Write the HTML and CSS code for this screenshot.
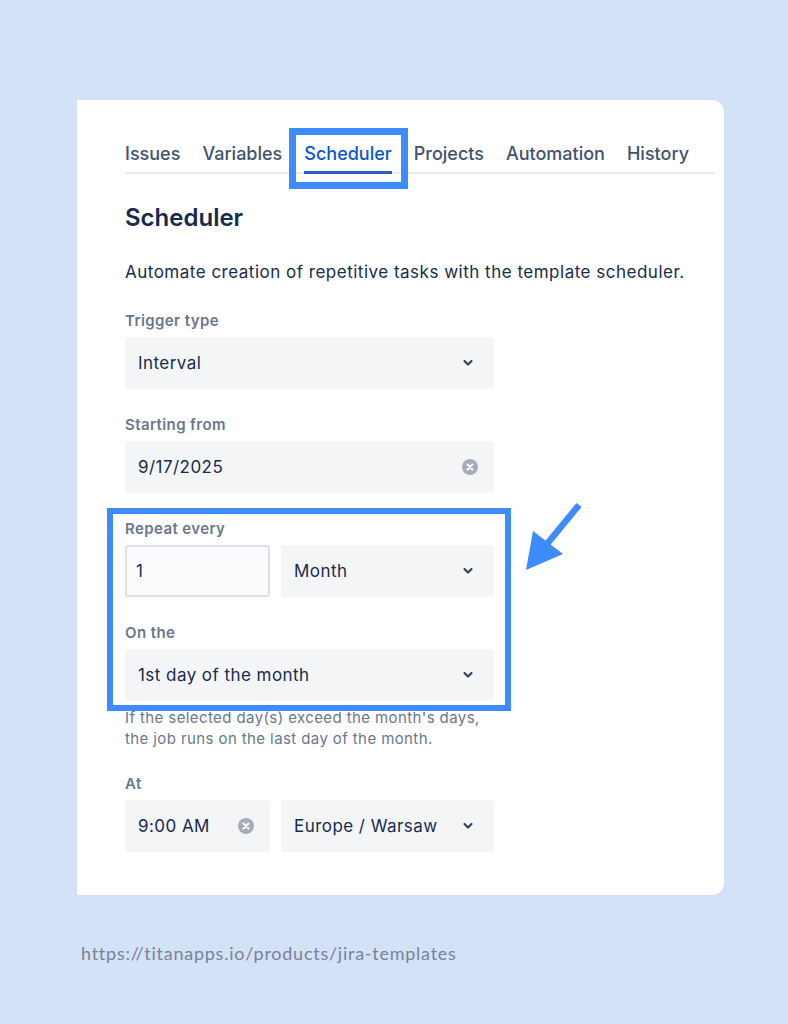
FILE: index.html
```html
<!DOCTYPE html>
<html lang="en">
<head>
    <meta charset="UTF-8">
    <title>Scheduler</title>
    <link rel="stylesheet" href="styles.css">
</head>
<body>
<div class="card">
    <nav class="tabs">
        <span class="tab">Issues</span>
        <span class="tab">Variables</span>
        <span class="tab active">Scheduler</span>
        <span class="tab">Projects</span>
        <span class="tab">Automation</span>
        <span class="tab">History</span>
    </nav>

    <h2>Scheduler</h2>
    <p class="desc">Automate creation of repetitive tasks with the template scheduler.</p>

    <div class="field">
        <label>Trigger type</label>
        <div class="select wide">
            <span>Interval</span>
            <svg class="chev" viewBox="0 0 12 8"><path d="M2.5 2l3.5 3.5 3.5-3.5"/></svg>
        </div>
    </div>

    <div class="field">
        <label>Starting from</label>
        <div class="select wide">
            <span>9/17/2025</span>
            <svg class="clear" viewBox="0 0 16 16"><circle cx="8" cy="8" r="8"/><path d="M5.5 5.5l5 5M10.5 5.5l-5 5"/></svg>
        </div>
    </div>

    <div class="group">
        <div class="field">
            <label>Repeat every</label>
            <div class="row">
                <div class="input">1</div>
                <div class="select half">
                    <span>Month</span>
                    <svg class="chev" viewBox="0 0 12 8"><path d="M2.5 2l3.5 3.5 3.5-3.5"/></svg>
                </div>
            </div>
        </div>
        <div class="field">
            <label>On the</label>
            <div class="select wide">
                <span>1st day of the month</span>
                <svg class="chev" viewBox="0 0 12 8"><path d="M2.5 2l3.5 3.5 3.5-3.5"/></svg>
            </div>
        </div>
    </div>
    <p class="help">If the selected day(s) exceed the month's days,<br>the job runs on the last day of the month.</p>

    <div class="field at">
        <label>At</label>
        <div class="row">
            <div class="select small">
                <span>9:00 AM</span>
                <svg class="clear" viewBox="0 0 16 16"><circle cx="8" cy="8" r="8"/><path d="M5.5 5.5l5 5M10.5 5.5l-5 5"/></svg>
            </div>
            <div class="select half">
                <span>Europe / Warsaw</span>
                <svg class="chev" viewBox="0 0 12 8"><path d="M2.5 2l3.5 3.5 3.5-3.5"/></svg>
            </div>
        </div>
    </div>

    <svg class="arrow" viewBox="0 0 70 80">
        <path class="shaft" d="M59 7L22 52"/>
        <path class="head" d="M6 72L13 33L43 56Z"/>
    </svg>
</div>
<p class="url">https://titanapps.io/products/jira-templates</p>
</body>
</html>
```

FILE: styles.css
```css
body {
    margin: 0;
    padding: 100px 0 0 0;
    background: #d3e2f7;
    font-family: "Inter", "Noto Sans", sans-serif;
    color: #172b4d;
    height: 1024px;
    box-sizing: border-box;
}

h2, p, label {
    margin: 0;
}

.card {
    position: relative;
    margin-left: 77px;
    width: 647px;
    height: 795px;
    box-sizing: border-box;
    padding: 42px 9px 0 48px;
    background: #fff;
    border-radius: 0 12px 12px 0;
}

.tabs {
    display: flex;
    gap: 22px;
    border-bottom: 2px solid #ebecf0;
}

.tab {
    position: relative;
    font-size: 18px;
    line-height: 24px;
    font-weight: 500;
    color: #42526e;
    padding-bottom: 5px;
    border-bottom: 3px solid transparent;
    margin-bottom: -2px;
}

.tab.active {
    color: #0b57d0;
    border-bottom-color: #2a5fcf;
}

.tab.active::after {
    content: "";
    position: absolute;
    top: -14px;
    bottom: -18px;
    left: -15px;
    right: -16px;
    border: 7px solid #3d8bfd;
}

h2 {
    margin-top: 28px;
    font-size: 24px;
    line-height: 32px;
    font-weight: 600;
    color: #172b4d;
}

.desc {
    margin-top: 26px;
    font-size: 17px;
    letter-spacing: 0.5px;
    line-height: 24px;
}

.field {
    margin-top: 26px;
}

.desc + .field {
    margin-top: 27px;
}

.field label {
    display: block;
    font-size: 15px;
    letter-spacing: 0.4px;
    line-height: 20px;
    font-weight: 600;
    color: #6b778c;
    margin-bottom: 6px;
}

.row {
    display: flex;
    gap: 11px;
}

.select {
    display: flex;
    align-items: center;
    justify-content: space-between;
    height: 52px;
    box-sizing: border-box;
    padding: 0 20px 0 13px;
    background: #f4f5f7;
    border-radius: 3px;
    font-size: 17px;
    letter-spacing: 0.45px;
}

.wide {
    width: 369px;
}

.half {
    width: 213px;
}

.small {
    width: 145px;
}

.input {
    width: 145px;
    height: 52px;
    box-sizing: border-box;
    display: flex;
    align-items: center;
    padding-left: 9px;
    border: 2px solid #dfe1e6;
    border-radius: 3px;
    background: #fafbfc;
    font-size: 17px;
}

.chev {
    width: 12px;
    height: 8px;
    fill: none;
    stroke: #344563;
    stroke-width: 2.2;
    stroke-linecap: round;
    stroke-linejoin: round;
}

.clear {
    width: 16px;
    height: 16px;
    margin-right: -4px;
}

.clear circle {
    fill: #a5adba;
}

.clear path {
    stroke: #fff;
    stroke-width: 2;
    stroke-linecap: round;
}

.group {
    position: relative;
    width: 369px;
    margin-top: 26px;
}

.group::after {
    content: "";
    position: absolute;
    top: -11px;
    bottom: -10px;
    left: -18px;
    right: -17px;
    border: 6px solid #3d8bfd;
}

.help {
    margin-top: 6px;
    font-size: 15px;
    letter-spacing: 0.4px;
    line-height: 21px;
    color: #6b778c;
}

.field.at {
    margin-top: 25px;
}

.arrow {
    position: absolute;
    left: 443px;
    top: 398px;
    width: 70px;
    height: 80px;
}

.arrow .shaft {
    stroke: #3d8bfd;
    stroke-width: 6.5;
    fill: none;
}

.arrow .head {
    fill: #3d8bfd;
}

.url {
    margin: 46px 0 0 81px;
    font-family: "Lato", sans-serif;
    font-size: 18px;
    letter-spacing: 0.75px;
    line-height: 24px;
    color: #7b8196;
}
```
